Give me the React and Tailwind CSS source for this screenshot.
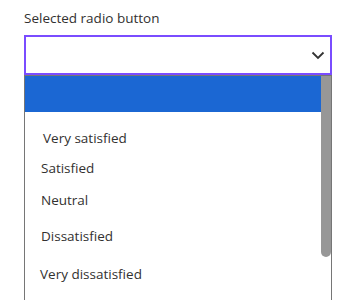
import React from 'react'

const options = [
  { label: 'Very satisfied', cls: 'pl-[18px] pt-[12px] h-[40px]' },
  { label: 'Satisfied', cls: 'pl-[16px] h-[32px]' },
  { label: 'Neutral', cls: 'pl-[16px] h-[33px]' },
  { label: 'Dissatisfied', cls: 'pl-[16px] h-[38px]' },
  { label: 'Very dissatisfied', cls: 'pl-[15px] h-[38px]' },
]

export default function App() {
  return (
    <div className="w-[354px] h-[300px] overflow-hidden bg-white text-[#323130]" style={{ fontFamily: '"Open Sans", "Noto Sans", sans-serif' }}>
      <div className="pl-6 pr-[22px] pt-[9px]">
        <div className="text-[13.5px] leading-[19px] mb-[7px]">Selected radio button</div>
        <div className="h-[40px] border-2 border-[#7a4cff] flex items-center justify-end pr-[5px]">
          <svg width="14" height="9" viewBox="0 0 14 9" fill="none">
            <path d="M1.5 1.5 L7 7 L12.5 1.5" stroke="#333" strokeWidth="1.8" />
          </svg>
        </div>
        <div className="relative border-x border-t border-[#767676] h-[240px]">
          <div className="h-[36px] bg-[#1b67d3] mr-[10px]" />
          <div className="mr-[10px]">
            {options.map(o => (
              <div key={o.label} className={`flex items-center text-[13.5px] ${o.cls}`}>
                {o.label}
              </div>
            ))}
          </div>
          <div className="absolute right-0 top-0 w-[10px] h-[181px] bg-[#979797] rounded-t-[3px] rounded-b-full" />
        </div>
      </div>
    </div>
  )
}
